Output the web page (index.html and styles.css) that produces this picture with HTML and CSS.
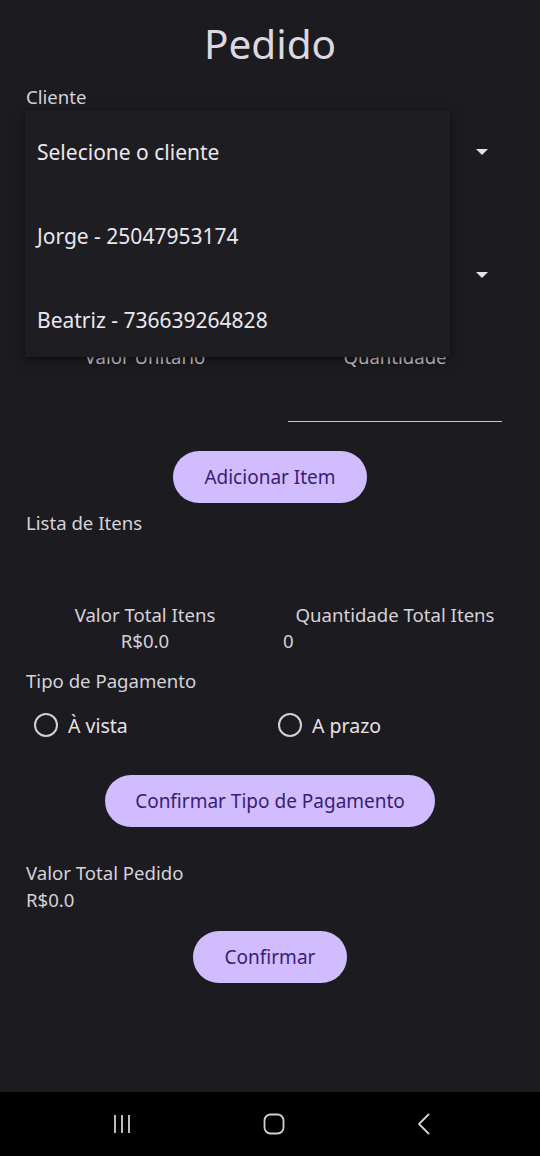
FILE: index.html
```html
<!DOCTYPE html>
<html lang="pt">
<head>
<meta charset="utf-8">
<link rel="stylesheet" href="styles.css">
</head>
<body>
<div class="screen">
  <main class="page">
    <h1 class="title">Pedido</h1>
    <div class="label cliente">Cliente</div>
    <div class="select select-1"><span class="arrow"></span></div>
    <div class="select select-2"><span class="arrow"></span></div>
    <div class="fields">
      <div class="field">
        <div class="field-label">Valor Unitário</div>
      </div>
      <div class="field field-line">
        <div class="field-label">Quantidade</div>
      </div>
    </div>
    <div class="btn-row btn-row-add"><button class="btn btn-add">Adicionar Item</button></div>
    <div class="label lista">Lista de Itens</div>
    <div class="totals">
      <div class="total total-left">
        <div class="total-title">Valor Total Itens</div>
        <div class="total-value">R$0.0</div>
      </div>
      <div class="total total-right">
        <div class="total-title">Quantidade Total Itens</div>
        <div class="total-value">0</div>
      </div>
    </div>
    <div class="label tipo">Tipo de Pagamento</div>
    <div class="radios">
      <label class="radio"><span class="circle"></span>À vista</label>
      <label class="radio"><span class="circle"></span>A prazo</label>
    </div>
    <div class="btn-row btn-row-pay"><button class="btn btn-pay">Confirmar Tipo de Pagamento</button></div>
    <div class="label pedido-title">Valor Total Pedido</div>
    <div class="label pedido-value">R$0.0</div>
    <div class="btn-row btn-row-confirm"><button class="btn btn-confirm">Confirmar</button></div>

    <ul class="menu">
      <li class="menu-item">Selecione o cliente</li>
      <li class="menu-item">Jorge - 25047953174</li>
      <li class="menu-item">Beatriz - 736639264828</li>
    </ul>
  </main>
  <nav class="navbar">
    <svg class="nav-icon" width="18" height="22" viewBox="0 0 18 22"><path d="M2 2v18M9 2v18M16 2v18" stroke="#d0d0d0" stroke-width="1.8" fill="none"/></svg>
    <svg class="nav-icon" width="22" height="22" viewBox="0 0 22 22"><rect x="1.5" y="1.5" width="19" height="19" rx="6" stroke="#d0d0d0" stroke-width="1.8" fill="none"/></svg>
    <svg class="nav-icon" width="14" height="24" viewBox="0 0 14 24"><path d="M12 2L2 12L12 22" stroke="#d0d0d0" stroke-width="1.8" fill="none" stroke-linejoin="round"/></svg>
  </nav>
</div>
</body>
</html>
```

FILE: styles.css
```css
* { box-sizing: border-box; }
html, body { margin: 0; padding: 0; }
body {
  background: #1c1b1f;
  font-family: "Noto Sans", Roboto, sans-serif;
  color: #e6e1e5;
}
.screen {
  width: 540px;
  height: 1156px;
  display: flex;
  flex-direction: column;
}
.page {
  position: relative;
  flex: 1;
  display: flex;
  flex-direction: column;
  padding: 0 26px;
}
.title {
  margin: 18px 0 0;
  height: 52px;
  line-height: 52px;
  font-size: 40.5px;
  font-weight: 400;
  text-align: center;
  color: #dcd8e0;
}
.label {
  font-size: 18.6px;
  line-height: 24px;
  color: #d6d2da;
}
.cliente { margin-top: 15px; }
.select {
  position: relative;
  height: 84px;
}
.select-1 { margin-top: 1px; }
.select-2 { margin-top: 39px; }
.arrow {
  position: absolute;
  right: 26px;
  top: 50%;
  margin-top: -3px;
  width: 0; height: 0;
  border-left: 6px solid transparent;
  border-right: 6px solid transparent;
  border-top: 6px solid #e6e1e5;
}
.fields {
  display: grid;
  grid-template-columns: 214px 214px;
  column-gap: 36px;
  padding: 0 12px;
  margin-top: 28px;
}
.field {
  height: 77px;
  border-bottom: 1.5px solid transparent;
}
.field-line { border-bottom-color: #cac4d0; }
.field-label {
  text-align: center;
  font-size: 18.6px;
  line-height: 24px;
  color: #cac4d0;
}
.btn-row {
  display: flex;
  justify-content: center;
}
.btn-row-add { margin-top: 29px; }
.btn {
  border: none;
  border-radius: 26px;
  height: 52px;
  background: #d0bcff;
  color: #381e72;
  font-family: inherit;
  font-size: 19px;
  padding: 0;
}
.btn-add { width: 194px; }
.lista { margin-top: 8px; }
.totals {
  display: grid;
  grid-template-columns: 214px 224px;
  column-gap: 31px;
  padding: 0 12px;
  margin-top: 67px;
}
.total {
  display: flex;
  flex-direction: column;
  font-size: 18.6px;
  line-height: 26px;
  color: #d6d2da;
}
.total-left { align-items: center; }
.total-right .total-title { text-align: center; white-space: nowrap; }
.tipo { margin-top: 15px; }
.radios {
  display: grid;
  grid-template-columns: 244px 1fr;
  padding-left: 8px;
  margin-top: 12px;
}
.radio {
  display: flex;
  align-items: center;
  gap: 10px;
  height: 40px;
  font-size: 19.5px;
  color: #e6e1e5;
}
.circle {
  width: 24px;
  height: 24px;
  border: 2px solid #d4d0d8;
  border-radius: 50%;
}
.btn-row-pay { margin-top: 30px; }
.btn-pay { width: 330px; }
.pedido-title { margin-top: 34px; }
.pedido-value { margin-top: 3px; }
.btn-row-confirm { margin-top: 19px; }
.btn-confirm { width: 154px; }
.menu {
  position: absolute;
  top: 110px;
  left: 25px;
  width: 425px;
  height: 247px;
  margin: 0;
  padding: 0;
  list-style: none;
  overflow: hidden;
  background: #1e1d22;
  box-shadow: 0 4px 12px rgba(0,0,0,0.35), 0 1px 3px rgba(0,0,0,0.3);
}
.menu-item {
  height: 84px;
  display: flex;
  align-items: center;
  padding-left: 12px;
  font-size: 21px;
  color: #ebe7ee;
}
.navbar {
  height: 64px;
  background: #000;
  display: flex;
  align-items: center;
  justify-content: center;
  gap: 132px;
  padding-left: 4px;
}
.nav-icon { display: block; }
```
